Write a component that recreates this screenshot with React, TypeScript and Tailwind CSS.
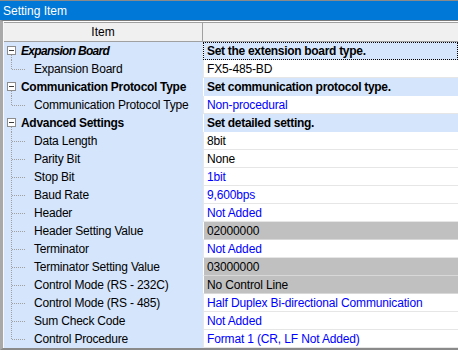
import React from "react";

type Row = {
  label: string;
  value: string;
  group?: boolean;
  italic?: boolean;
  blue?: boolean;
  gray?: boolean;
  last?: boolean;
  focus?: boolean;
};

const rows: Row[] = [
  { label: "Expansion Board", value: "Set the extension board type.", group: true, italic: true, focus: true },
  { label: "Expansion Board", value: "FX5-485-BD", last: true },
  { label: "Communication Protocol Type", value: "Set communication protocol type.", group: true },
  { label: "Communication Protocol Type", value: "Non-procedural", blue: true, last: true },
  { label: "Advanced Settings", value: "Set detailed setting.", group: true },
  { label: "Data Length", value: "8bit" },
  { label: "Parity Bit", value: "None" },
  { label: "Stop Bit", value: "1bit", blue: true },
  { label: "Baud Rate", value: "9,600bps", blue: true },
  { label: "Header", value: "Not Added", blue: true },
  { label: "Header Setting Value", value: "02000000", gray: true },
  { label: "Terminator", value: "Not Added", blue: true },
  { label: "Terminator Setting Value", value: "03000000", gray: true },
  { label: "Control Mode (RS - 232C)", value: "No Control Line", gray: true },
  { label: "Control Mode (RS - 485)", value: "Half Duplex Bi-directional Communication", blue: true },
  { label: "Sum Check Code", value: "Not Added", blue: true },
  { label: "Control Procedure", value: "Format 1 (CR, LF Not Added)", blue: true, last: true },
];

function MinusBox() {
  return (
    <svg width="17" height="18" className="shrink-0">
      <rect x="3.5" y="4.5" width="8" height="8" fill="#ffffff" stroke="#8c8c8c" />
      <line x1="5" y1="8.5" x2="10" y2="8.5" stroke="#3c3c3c" />
      <line x1="7.5" y1="13" x2="7.5" y2="18" stroke="#a0a0a0" strokeDasharray="1 1" />
    </svg>
  );
}

function Branch({ last }: { last?: boolean }) {
  return (
    <svg width="30" height="18" className="shrink-0">
      <line x1="7.5" y1="0" x2="7.5" y2={last ? 9 : 18} stroke="#a0a0a0" strokeDasharray="1 1" />
      <line x1="8" y1="9.5" x2="22" y2="9.5" stroke="#a0a0a0" strokeDasharray="1 1" />
    </svg>
  );
}

export default function App() {
  return (
    <div
      className="w-[458px] h-[350px] overflow-hidden bg-[#f0f0f0] text-[12px] leading-none text-black"
      style={{ fontFamily: '"Liberation Sans", Arial, sans-serif' }}
    >
      <div className="h-[20px] border-t border-[#8a8a8a] bg-[#0078d7] pl-[3px] flex items-center text-white">
        Setting Item
      </div>
      <div className="border-t border-[#7a7a7a] border-l-[3px] border-l-[#a9a9a9] border-b-2 border-b-[#8a8a8a] bg-white">
        <div className="border-t border-white border-l border-l-[#f8f8f8]">
          <div className="grid grid-cols-[199px_1fr] h-[20px] bg-[#f0f0f0] border-t border-[#a0a0a0] border-b border-b-[#a0a0a0]">
            <div className="flex items-center justify-center border-r border-[#a0a0a0]">Item</div>
            <div />
          </div>
          {rows.map((r, i) => (
            <div key={i} className="grid grid-cols-[199px_1fr] h-[18px]">
              <div className="flex items-center bg-[#d5e5fb]">
                {r.group ? <MinusBox /> : <Branch last={r.last} />}
                <span
                  className={
                    r.group
                      ? r.italic
                        ? "font-bold italic tracking-[-0.7px]"
                        : "font-bold tracking-[-0.3px]"
                      : "tracking-[-0.2px]"
                  }
                >
                  {r.label}
                </span>
              </div>
              <div
                className={
                  "flex items-center pl-[3px] " +
                  (r.group
                    ? "bg-[#d5e5fb] font-bold tracking-[-0.3px] border-l border-white"
                    : r.gray
                    ? "bg-[#c0c0c0] tracking-[-0.15px] border-l border-white border-b border-b-[#d8d8d8]"
                    : "bg-white tracking-[-0.15px] border-l border-[#e8e8e8] border-b border-b-[#e6e6e6]") +
                  (r.blue ? " text-[#0000ff]" : "") +
                  (r.focus ? " outline-1 outline-dotted outline-black -outline-offset-1" : "")
                }
              >
                {r.value}
              </div>
            </div>
          ))}
        </div>
      </div>
    </div>
  );
}
